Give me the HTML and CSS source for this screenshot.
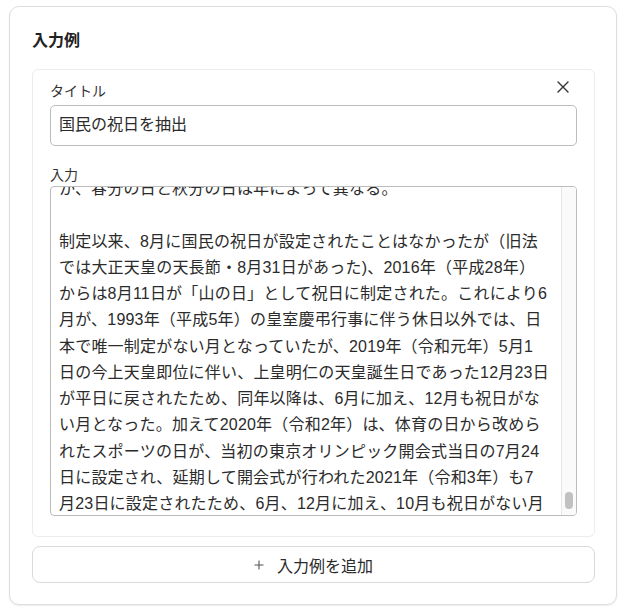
FILE: index.html
```html
<!DOCTYPE html>
<html lang="ja">
<head>
<meta charset="utf-8">
<title>入力例</title>
<link rel="stylesheet" href="styles.css">
</head>
<body>
<div class="page">
  <section class="card">
    <h2 class="heading">入力例</h2>
    <div class="example">
      <div class="example-head">
        <label class="label label-title">タイトル</label>
        <button class="close" type="button" aria-label="削除">
          <svg width="12" height="12" viewBox="0 0 12 12"><path d="M1 1 L11 11 M11 1 L1 11" stroke="#333" stroke-width="1.4" fill="none" stroke-linecap="round"/></svg>
        </button>
      </div>
      <div class="input">国民の祝日を抽出</div>
      <label class="label label-input">入力</label>
      <div class="textarea">
        <div class="textarea-view">
          <div class="textarea-content">
            <div class="ln">か、春分の日と秋分の日は年によって異なる。</div>
            <div class="ln">&nbsp;</div>
            <div class="ln">制定以来、8月に国民の祝日が設定されたことはなかったが（旧法</div>
            <div class="ln">では大正天皇の天長節・8月31日があった)、2016年（平成28年）</div>
            <div class="ln">からは8月11日が「山の日」として祝日に制定された。これにより6</div>
            <div class="ln">月が、1993年（平成5年）の皇室慶弔行事に伴う休日以外では、日</div>
            <div class="ln">本で唯一制定がない月となっていたが、2019年（令和元年）5月1</div>
            <div class="ln">日の今上天皇即位に伴い、上皇明仁の天皇誕生日であった12月23日</div>
            <div class="ln">が平日に戻されたため、同年以降は、6月に加え、12月も祝日がな</div>
            <div class="ln">い月となった。加えて2020年（令和2年）は、体育の日から改めら</div>
            <div class="ln">れたスポーツの日が、当初の東京オリンピック開会式当日の7月24</div>
            <div class="ln">日に設定され、延期して開会式が行われた2021年（令和3年）も7</div>
            <div class="ln">月23日に設定されたため、6月、12月に加え、10月も祝日がない月</div>
          </div>
        </div>
        <div class="scrollbar"><div class="thumb"></div></div>
      </div>
    </div>
    <button class="add" type="button">
      <svg width="10" height="10" viewBox="0 0 10 10"><path d="M5 0.5 V9.5 M0.5 5 H9.5" stroke="#555" stroke-width="1.1" fill="none"/></svg>
      <span>入力例を追加</span>
    </button>
  </section>
</div>
</body>
</html>
```

FILE: styles.css
```css
* { box-sizing: border-box; }
html, body {
  margin: 0;
  padding: 0;
  background: #ffffff;
}
body {
  font-family: "Liberation Sans", "Noto Sans CJK JP", sans-serif;
  color: #2b2b2b;
}
.page {
  padding: 6px 12px 6px 9px;
}
.card {
  border: 1px solid #dedede;
  border-radius: 10px;
  box-shadow: 0 1px 2px rgba(0, 0, 0, 0.08);
  padding: 22px 21px 21px 22px;
  background: #fff;
}
.heading {
  margin: 0 0 16px 0;
  font-size: 16px;
  line-height: 24px;
  font-weight: 700;
  color: #222;
}
.example {
  border: 1px solid #ececec;
  border-radius: 6px;
  padding: 7px 17px 20px 17px;
}
.example-head {
  display: flex;
  justify-content: space-between;
  align-items: flex-start;
}
.label {
  display: block;
  font-size: 14px;
  color: #333;
}
.label-title {
  margin-top: 4px;
  line-height: 20px;
}
.close {
  width: 20px;
  height: 20px;
  margin-right: 4px;
  padding: 0;
  border: 0;
  background: transparent;
  display: flex;
  align-items: center;
  justify-content: center;
}
.input {
  margin-top: 4px;
  height: 41px;
  border: 1px solid #bcbcbc;
  border-radius: 5px;
  padding: 0 8px;
  font-size: 16px;
  line-height: 38px;
  color: #2b2b2b;
}
.label-input {
  margin-top: 21px;
  margin-bottom: 3px;
  line-height: 16px;
}
.textarea {
  height: 330px;
  border: 1px solid #bcbcbc;
  border-radius: 4px;
  display: flex;
  overflow: hidden;
}
.textarea-view {
  flex: 1;
  overflow: hidden;
  padding: 0 8px;
}
.textarea-content {
  margin-top: -11px;
  font-size: 16px;
  line-height: 26.25px;
  color: #2b2b2b;
  white-space: nowrap;
  letter-spacing: 0.2px;
}
.scrollbar {
  width: 15px;
  flex: none;
  background: #fafafa;
  border-left: 1px solid #e6e6e6;
  display: flex;
  flex-direction: column;
  justify-content: flex-end;
  padding: 0 3px 6px 3px;
}
.thumb {
  width: 8px;
  height: 17px;
  border-radius: 4px;
  background: #c1c1c1;
}
.add {
  margin-top: 9px;
  width: 100%;
  height: 37px;
  border: 1px solid #d9d9d9;
  border-radius: 8px;
  background: #fff;
  display: flex;
  align-items: center;
  justify-content: center;
  gap: 13px;
  font-family: "Liberation Sans", "Noto Sans CJK JP", sans-serif;
  font-size: 16px;
  color: #2b2b2b;
  padding: 0;
}
```
